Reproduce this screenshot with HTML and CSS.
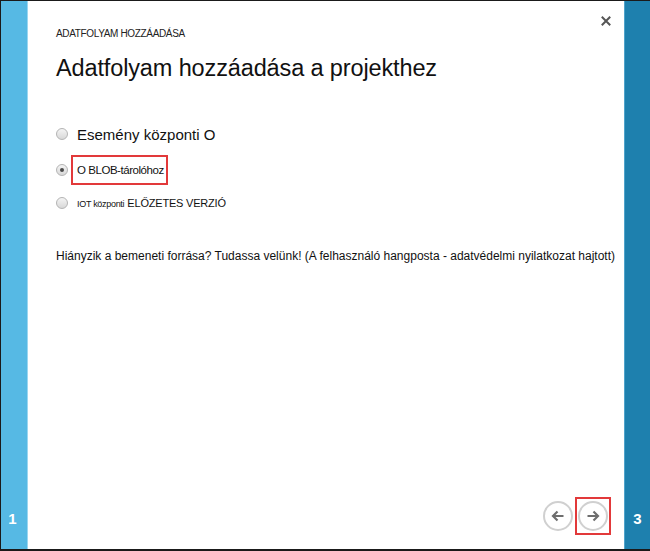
FILE: index.html
```html
<!DOCTYPE html>
<html lang="hu">
<head>
<meta charset="utf-8">
<link rel="stylesheet" href="styles.css">
</head>
<body>
<div class="frame">
  <div class="strip strip-left"><span class="step">1</span></div>
  <div class="main">
    <button class="close" aria-label="Bezárás">
      <svg width="10" height="10" viewBox="0 0 10 10"><path d="M1.5 1.5 L8.5 8.5 M8.5 1.5 L1.5 8.5" stroke="#555" stroke-width="2" stroke-linecap="square"/></svg>
    </button>
    <div class="kicker">ADATFOLYAM HOZZÁADÁSA</div>
    <h1 class="title">Adatfolyam hozzáadása a projekthez</h1>
    <div class="options">
      <label class="option opt-large"><span class="radio"></span><span class="lbl">Esemény központi O</span></label>
      <label class="option opt-mid"><span class="radio checked"></span><span class="lbl boxed">O BLOB-tárolóhoz</span></label>
      <label class="option opt-small"><span class="radio"></span><span class="lbl"><span class="tiny">IOT központi</span> <span class="preview">ELŐZETES VERZIÓ</span></span></label>
    </div>
    <p class="note">Hiányzik a bemeneti forrása? Tudassa velünk! (A felhasználó hangposta - adatvédelmi nyilatkozat hajtott)</p>
    <div class="nav">
      <button class="circle" aria-label="Vissza">
        <svg width="14" height="12" viewBox="0 0 14 12"><path d="M12.5 6 H2.5 M6.5 1.5 L2 6 L6.5 10.5" fill="none" stroke="#6e6e6e" stroke-width="2.2"/></svg>
      </button>
      <div class="next-wrap">
        <button class="circle" aria-label="Tovább">
          <svg width="14" height="12" viewBox="0 0 14 12"><path d="M1.5 6 H11.5 M7.5 1.5 L12 6 L7.5 10.5" fill="none" stroke="#6e6e6e" stroke-width="2.2"/></svg>
        </button>
      </div>
    </div>
  </div>
  <div class="strip strip-right"><span class="step">3</span></div>
</div>
</body>
</html>
```

FILE: styles.css
```css
* { box-sizing: border-box; }
html, body { margin: 0; padding: 0; }
body {
  width: 650px;
  height: 551px;
  background: #1a1a1a;
  font-family: "Liberation Sans", Arial, sans-serif;
  color: #111;
  overflow: hidden;
}
.frame {
  display: flex;
  height: 548px;
  margin: 1px 0 2px 1px;
  background: #fff;
}
.strip {
  display: flex;
  align-items: flex-end;
  justify-content: center;
  padding-bottom: 22px;
  color: #fff;
  font-weight: bold;
  font-size: 15px;
}
.strip-left {
  width: 27px;
  background: #56b9e4;
  border-right: 1px solid #9ad6f0;
  padding-right: 3px;
}
.strip-right {
  width: 26px;
  background: #1e80ae;
  border-left: 1px solid #4fa3cb;
}
.main {
  flex: 1;
  position: relative;
  padding: 27px 0 0 28px;
  display: flex;
  flex-direction: column;
}
.close {
  position: absolute;
  top: 15px;
  right: 13px;
  border: 0;
  background: none;
  padding: 0;
  width: 10px;
  height: 10px;
  display: flex;
}
.kicker {
  font-size: 10px;
  letter-spacing: -0.35px;
  color: #222;
  line-height: 12px;
}
.title {
  margin: 13px 0 0;
  font-weight: normal;
  font-size: 23.5px;
  line-height: 30px;
  letter-spacing: -0.13px;
  color: #111;
}
.options {
  margin-top: 41px;
  display: flex;
  flex-direction: column;
}
.option {
  display: flex;
  align-items: center;
  gap: 9px;
}
.radio {
  width: 12px;
  height: 12px;
  border-radius: 50%;
  border: 1px solid #b4b4b4;
  background: linear-gradient(#f4f4f4, #d8d8d8);
  flex: none;
  display: flex;
  align-items: center;
  justify-content: center;
}
.radio.checked::after {
  content: "";
  width: 4px;
  height: 4px;
  border-radius: 50%;
  background: #4a4a4a;
}
.opt-large { height: 20px; font-size: 15px; }
.opt-mid { height: 32px; margin-top: 10px; font-size: 11.5px; }
.opt-small { height: 20px; margin-top: 7px; font-size: 11px; }
.boxed {
  border: 2px solid #e2393a;
  padding: 7px 2px 7px 4px;
  margin-left: -6px;
  letter-spacing: -0.45px;
}
.tiny { font-size: 9px; letter-spacing: -0.3px; }
.preview { font-size: 11px; letter-spacing: -0.2px; }
.note {
  margin: 35px 0 0;
  font-size: 12px;
  letter-spacing: 0;
  line-height: 16px;
  color: #111;
}
.nav {
  margin-top: auto;
  margin-bottom: 14px;
  display: flex;
  justify-content: flex-end;
  align-items: center;
  padding-right: 13px;
  gap: 2px;
}
.circle {
  width: 30px;
  height: 30px;
  border-radius: 50%;
  border: 2px solid #d0d0d0;
  background: #fff;
  padding: 0;
  display: flex;
  align-items: center;
  justify-content: center;
}
.next-wrap {
  border: 2px solid #e2393a;
  padding: 2px 1px;
}
```
